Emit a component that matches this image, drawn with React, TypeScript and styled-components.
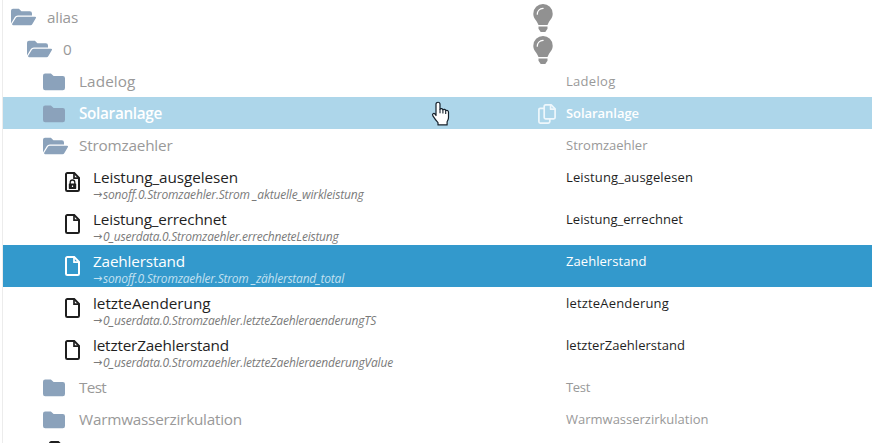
import React, { useLayoutEffect, useRef } from "react";
import styled, { createGlobalStyle, css } from "styled-components";

const GlobalStyle = createGlobalStyle`
  body { margin: 0; background: #fff; overflow: hidden; }
  * { box-sizing: border-box; }
`;

type Tone = "folder" | "hover" | "state" | "selected";
type Kind = "id" | "alias" | "name";

const Tree = styled.main`
  height: 443px;
  margin-left: 2px;
  padding-top: 1px;
  border-left: 1px solid #ececec;
  overflow: hidden;
  font-family: "Open Sans", "Noto Sans", sans-serif;
`;

const tones = {
  folder: css`color: #999;`,
  hover: css`background: #add6ea; color: #fff;`,
  state: css`color: #1f1f1f;`,
  selected: css`background: #3399cc; color: #fff;`,
};

const Row = styled.div<{ $tone: Tone; $tall: boolean }>`
  display: grid;
  grid-template-columns: 525px 38px 1fr;
  height: ${(p) => (p.$tall ? 42 : 32)}px;
  ${(p) => tones[p.$tone]}
`;

const IdCell = styled.div<{ $indent: number }>`
  display: flex;
  align-items: center;
  padding-left: ${(p) => p.$indent}px;
`;

const IconSlot = styled.span<{ $width: number }>`
  display: flex;
  flex: none;
  width: ${(p) => p.$width}px;
`;

const Labels = styled.div`
  align-self: flex-start;
  display: flex;
  flex-direction: column;
`;

const TypeCell = styled.div<{ $bulb: boolean }>`
  display: flex;
  align-items: center;
  padding: ${(p) => (p.$bulb ? "2px 0 0 5px" : "0 0 0 10px")};
`;

const Line = styled.span<{ $kind: Kind; $tone: Tone }>`
  display: block;
  width: max-content;
  white-space: pre;
  font-weight: ${(p) => (p.$tone === "hover" ? 600 : 400)};
  ${(p) => p.$kind === "id" && css`font-size: 15.3px; line-height: 32px;`}
  ${(p) => p.$kind === "name" && css`font-size: 13px; line-height: 33px;`}
  ${(p) => p.$kind === "alias" && css`
    font-size: 12px;
    font-style: italic;
    line-height: 14px;
    color: ${p.$tone === "selected" ? "#c2e0f0" : "#7a7a7a"};
  `}
`;

const AliasLine = styled.div`
  display: flex;
  align-items: center;
  height: 14px;
  margin-top: -5px;
`;

const Arrow = styled.span<{ $tone: Tone }>`
  width: 10px;
  font: italic 11px/14px "DejaVu Sans", sans-serif;
  color: ${(p) => (p.$tone === "selected" ? "#c2e0f0" : "#7a7a7a")};
`;

const Pointer = styled.svg`
  position: absolute;
  left: 431px;
  top: 101px;
`;

/** Label whose tracking is adjusted so that it fills the given width. */
function FittedLabel({ text, width, kind, tone }: {
  text: string; width: number; kind: Kind; tone: Tone;
}) {
  const ref = useRef<HTMLSpanElement>(null);
  useLayoutEffect(() => {
    const el = ref.current!;
    el.style.letterSpacing = "0px";
    const natural = el.getBoundingClientRect().width;
    el.style.letterSpacing = `${(width - natural) / text.length}px`;
  }, [text, width]);
  return <Line ref={ref} $kind={kind} $tone={tone}>{text}</Line>;
}

const FolderIcon = () => (
  <svg width="22" height="18" viewBox="0 0 22 18" fill="#8ba2bb">
    <path d="M2.2.6h5.700l2.700 2.500h9.200A2.200 2.200 0 0 1 22 5.300v9.700a2.200 2.200 0 0 1-2.200 2.200H2.200A2.200 2.200 0 0 1 0 15V2.800A2.200 2.200 0 0 1 2.200.6Z" />
  </svg>
);

const OpenFolderIcon = () => (
  <svg width="25" height="18" viewBox="0 0 25 18" fill="#8ba2bb">
    <path d="M2 .7h5.900l2.500 2.500h8.400A2.200 2.200 0 0 1 21 5.400v2H6.900a3.600 3.600 0 0 0-3.200 1.900L0 15.400V2.800A2.100 2.100 0 0 1 2 .7Z" />
    <path d="M6.900 8.700h17.200c.8 0 1.200.7.8 1.400l-3.500 5.900A2.200 2.200 0 0 1 19.500 17.200H2c-.8 0-1.200-.7-.8-1.400L4.900 9.800a2.300 2.300 0 0 1 2-1.100Z" />
  </svg>
);

const FileIcon = ({ locked = false }: { locked?: boolean }) => (
  <svg width="15" height="20" viewBox="0 0 15 20">
    <path d="M2.300 1h6.900L14 5.800v11.900A1.300 1.300 0 0 1 12.700 19H2.300A1.300 1.300 0 0 1 1 17.700V2.300A1.300 1.300 0 0 1 2.300 1Z" fill="none" stroke="currentColor" strokeWidth="2" />
    <path d="M9 1.500v4.700h4.700" fill="none" stroke="currentColor" strokeWidth="1.700" />
    {locked && <>
      <path d="M5.200 12v-1.700a2.300 2.300 0 0 1 4.600 0V12" fill="none" stroke="currentColor" strokeWidth="1.300" />
      <path fillRule="evenodd" d="M4.400 11.500h6.200c.4 0 .6.300.6.600v4.200c0 .4-.2.700-.6.700H4.400c-.4 0-.6-.3-.6-.7v-4.200c0-.3.2-.6.600-.6Zm2.500 2v1.500h1.200v-1.500Z" fill="currentColor" />
    </>}
  </svg>
);

const BulbIcon = () => (
  <svg width="20" height="28" viewBox="0 0 20 28">
    <path d="M10 0a9.700 9.700 0 0 1 9.700 9.700c0 4.300-2.500 5.600-4.500 9.800-.4.900-.7 1.600-1.300 1.600H6.100c-.6 0-.9-.7-1.300-1.600-2-4.200-4.500-5.500-4.500-9.800A9.700 9.700 0 0 1 10 0ZM5.500 22.500h9v2.300L12.300 28H7.700l-2.200-3.200Z" fill="#919191" />
    <path d="M4.300 10.200c0-3.300 2.400-5.700 5.800-5.900" fill="none" stroke="#fff" strokeWidth="1.300" strokeLinecap="round" />
  </svg>
);

const CopyIcon = () => (
  <svg width="18" height="20" viewBox="0 0 18 20" fill="none" stroke="#eef7fc" strokeWidth="1.700" strokeLinejoin="round">
    <path d="M7.500.9h5.700l3.900 3.900v8.800c0 .8-.5 1.300-1.300 1.300H7.500c-.8 0-1.300-.5-1.300-1.300V2.200c0-.8.5-1.300 1.300-1.300Z" />
    <path d="M12.600 1v4.200H17M6 4.300H2.200c-.8 0-1.300.5-1.300 1.300v12c0 .9.500 1.500 1.300 1.500h8.100c.9 0 1.500-.6 1.500-1.500v-2.500" />
  </svg>
);

type IconName = "open" | "closed" | "file" | "locked";
interface Entry {
  id: string; idWidth: number; indent: number; icon: IconName; tone: Tone;
  nameWidth?: number; alias?: string; aliasWidth?: number; bulb?: boolean;
}

const entries: Entry[] = [
  { id: "alias", idWidth: 31, indent: 8, icon: "open", tone: "folder", bulb: true },
  { id: "0", idWidth: 9, indent: 24, icon: "open", tone: "folder", bulb: true },
  { id: "Ladelog", idWidth: 56.5, indent: 40, icon: "closed", tone: "folder", nameWidth: 49.5 },
  { id: "Solaranlage", idWidth: 83, indent: 40, icon: "closed", tone: "hover", nameWidth: 73 },
  { id: "Stromzaehler", idWidth: 93.5, indent: 40, icon: "open", tone: "folder", nameWidth: 81.5 },
  { id: "Leistung_ausgelesen", idWidth: 145, indent: 62, icon: "locked", tone: "state", nameWidth: 127, alias: "sonoff.0.Stromzaehler.Strom _aktuelle_wirkleistung", aliasWidth: 260.5 },
  { id: "Leistung_errechnet", idWidth: 133.5, indent: 62, icon: "file", tone: "state", nameWidth: 117, alias: "0_userdata.0.Stromzaehler.errechneteLeistung", aliasWidth: 235.5 },
  { id: "Zaehlerstand", idWidth: 92, indent: 62, icon: "file", tone: "selected", nameWidth: 80.5, alias: "sonoff.0.Stromzaehler.Strom _zählerstand_total", aliasWidth: 241 },
  { id: "letzteAenderung", idWidth: 117.5, indent: 62, icon: "file", tone: "state", nameWidth: 103, alias: "0_userdata.0.Stromzaehler.letzteZaehleraenderungTS", aliasWidth: 273 },
  { id: "letzterZaehlerstand", idWidth: 136, indent: 62, icon: "file", tone: "state", nameWidth: 119, alias: "0_userdata.0.Stromzaehler.letzteZaehleraenderungValue", aliasWidth: 290 },
  { id: "Test", idWidth: 27, indent: 40, icon: "closed", tone: "folder", nameWidth: 24 },
  { id: "Warmwasserzirkulation", idWidth: 163, indent: 40, icon: "closed", tone: "folder", nameWidth: 142.5 },
];

const icons: Record<IconName, React.ReactNode> = {
  open: <OpenFolderIcon />,
  closed: <FolderIcon />,
  file: <FileIcon />,
  locked: <FileIcon locked />,
};

const EntryRow = ({ e }: { e: Entry }) => (
  <Row $tone={e.tone} $tall={!!e.alias}>
    <IdCell $indent={e.indent}>
      <IconSlot $width={e.alias ? 28 : 36}>{icons[e.icon]}</IconSlot>
      <Labels>
        <FittedLabel kind="id" tone={e.tone} text={e.id} width={e.idWidth} />
        {e.alias && (
          <AliasLine>
            <Arrow $tone={e.tone}>→</Arrow>
            <FittedLabel kind="alias" tone={e.tone} text={e.alias} width={e.aliasWidth!} />
          </AliasLine>
        )}
      </Labels>
    </IdCell>
    <TypeCell $bulb={!!e.bulb}>
      {e.bulb && <BulbIcon />}
      {e.tone === "hover" && <CopyIcon />}
    </TypeCell>
    <div>{e.nameWidth && <FittedLabel kind="name" tone={e.tone} text={e.id} width={e.nameWidth} />}</div>
  </Row>
);

export default function App() {
  return (
    <>
      <GlobalStyle />
      <Tree>
        {entries.map((e) => <EntryRow key={e.id} e={e} />)}
        <Row $tone="state" $tall={false}>
          <IdCell $indent={46}><FileIcon /></IdCell>
        </Row>
      </Tree>
      <Pointer width="19" height="25" viewBox="0 0 19 25">
        <path d="M5 14.500V3.200c0-2.600 4-2.600 4 0v5c.7-.9 2.500-.7 2.900.6.900-.8 2.500-.4 2.800.8 1.200-.7 2.800 0 2.800 1.700v5.200c0 2-.9 3-1.400 4.300v3.100H7v-2.300c-1.800-1.900-3.600-4.300-5.100-6.700-1.200-2 .9-3.200 2.200-1.700Z" fill="#fff" stroke="#14202b" strokeWidth="1.200" strokeLinejoin="round" />
        <path d="M9 8v4.200M11.900 9v3.500M14.700 10v3" stroke="#14202b" strokeWidth="1.100" />
      </Pointer>
    </>
  );
}
